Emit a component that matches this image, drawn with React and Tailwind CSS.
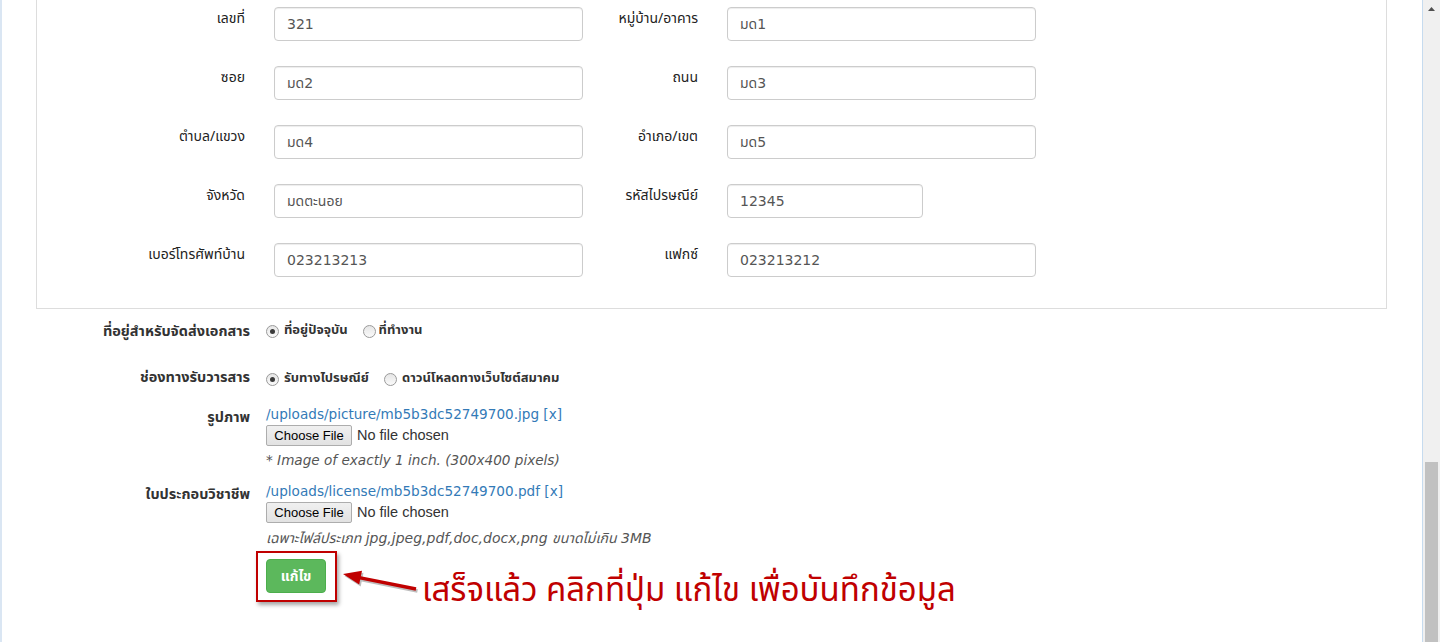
import React from "react";

const leftRows = [
  ["เลขที่", "321"],
  ["ซอย", "มด2"],
  ["ตำบล/แขวง", "มด4"],
  ["จังหวัด", "มดตะนอย"],
  ["เบอร์โทรศัพท์บ้าน", "023213213"],
];

const rightRows = [
  ["หมู่บ้าน/อาคาร", "มด1", false],
  ["ถนน", "มด3", false],
  ["อำเภอ/เขต", "มด5", false],
  ["รหัสไปรษณีย์", "12345", true],
  ["แฟกซ์", "023213212", false],
];

const Field = ({ value, short }) => (
  <div
    className={`${short ? "w-[196px]" : "w-[309px]"} h-[34px] flex items-center px-[12px] border border-[#ccc] rounded-[4px] bg-white shadow-[inset_0_1px_1px_rgba(0,0,0,0.075)] text-[14px] text-[#555] font-['DejaVu_Sans','Noto_Sans_Thai',sans-serif]`}
  >
    {value}
  </div>
);

const Radio = ({ checked }) => (
  <span className="w-[13px] h-[13px] rounded-full border border-[#9a9a9a] bg-gradient-to-b from-[#e6e6e6] to-[#fafafa] flex items-center justify-center shrink-0">
    {checked && <span className="w-[5px] h-[5px] rounded-full bg-[#3a3a3a]" />}
  </span>
);

const FileInput = () => (
  <div className="flex items-center h-[21px]">
    <span className="h-[21px] w-[86px] flex items-center justify-center border border-[#adadad] rounded-[2px] bg-gradient-to-b from-[#f0f0f0] to-[#e2e2e2] text-[13px] text-black font-['Liberation_Sans',Arial,sans-serif]">
      Choose File
    </span>
    <span className="ml-[5px] text-[14.5px] text-[#333] font-['Liberation_Sans',Arial,sans-serif]">No file chosen</span>
  </div>
);

export default function App() {
  return (
    <div className="w-[1440px] h-[642px] overflow-hidden flex bg-white font-['Tahoma','Noto_Sans_Thai','DejaVu_Sans',sans-serif]">
      <div className="w-[2px] bg-[#dae6f3] shrink-0" />

      <div className="w-[1420px] shrink-0">
        {/* address panel */}
        <div className="ml-[34px] w-[1351px] border-x border-b border-[#ddd] pt-[7px] pb-[31px]">
          <div className="flex flex-col gap-[25px]">
            {leftRows.map(([label, value], i) => (
              <div key={label} className="flex items-start">
                <div className="w-[208px] text-right text-[14px] text-[#222] pt-[2px] leading-[20px]">{label}</div>
                <div className="ml-[29px]">
                  <Field value={value} />
                </div>
                <div className="w-[115px] text-right text-[14px] text-[#222] pt-[2px] leading-[20px]">{rightRows[i][0]}</div>
                <div className="ml-[29px]">
                  <Field value={rightRows[i][1]} short={rightRows[i][2]} />
                </div>
              </div>
            ))}
          </div>
        </div>

        {/* lower form */}
        <div className="ml-[34px] mt-[12px] flex flex-col">
          <div className="flex items-center h-[20px]">
            <div className="w-[214px] text-right text-[14.5px] font-bold text-[#333] pt-[3px]">ที่อยู่สำหรับจัดส่งเอกสาร</div>
            <div className="ml-[16px] flex items-center text-[13px] font-bold text-[#333]">
              <Radio checked />
              <span className="ml-[5px]">ที่อยู่ปัจจุบัน</span>
              <span className="ml-[15px]"><Radio /></span>
              <span className="ml-[3px]">ที่ทำงาน</span>
            </div>
          </div>

          <div className="flex items-center h-[20px] mt-[28px]">
            <div className="w-[214px] text-right text-[14.5px] font-bold text-[#333]">ช่องทางรับวารสาร</div>
            <div className="ml-[16px] flex items-center text-[13px] font-bold text-[#333]">
              <Radio checked />
              <span className="ml-[5px]">รับทางไปรษณีย์</span>
              <span className="ml-[15px]"><Radio /></span>
              <span className="ml-[5px]">ดาวน์โหลดทางเว็บไซต์สมาคม</span>
            </div>
          </div>

          <div className="flex items-start mt-[17px]">
            <div className="w-[214px] text-right text-[14.5px] font-bold text-[#333] pt-[2px]">รูปภาพ</div>
            <div className="ml-[16px] flex flex-col">
              <a className="text-[13.6px] leading-[16px] text-[#337ab7] font-['DejaVu_Sans',sans-serif]">/uploads/picture/mb5b3dc52749700.jpg [x]</a>
              <div className="mt-[3px]"><FileInput /></div>
              <div className="mt-[6px] text-[13.6px] leading-[16px] italic text-[#555] font-['DejaVu_Sans',sans-serif]">* Image of exactly 1 inch. (300x400 pixels)</div>
            </div>
          </div>

          <div className="flex items-start mt-[15px]">
            <div className="w-[214px] text-right text-[14.5px] font-bold text-[#333] pt-[2px]">ใบประกอบวิชาชีพ</div>
            <div className="ml-[16px] flex flex-col">
              <a className="text-[13.6px] leading-[16px] text-[#337ab7] font-['DejaVu_Sans',sans-serif]">/uploads/license/mb5b3dc52749700.pdf [x]</a>
              <div className="mt-[3px]"><FileInput /></div>
              <div className="mt-[7px] text-[14px] leading-[16px] italic text-[#555] font-['DejaVu_Sans','Noto_Sans_Thai',sans-serif]">เฉพาะไฟล์ประเภท jpg,jpeg,pdf,doc,docx,png ขนาดไม่เกิน 3MB</div>
            </div>
          </div>

          {/* submit + annotation */}
          <div className="flex items-start mt-[5px] ml-[220px]">
            <div className="border-2 border-[#c00000] pt-[6px] pb-[7px] pl-[8px] pr-[9px] shadow-[2px_3px_4px_rgba(0,0,0,0.35)]">
              <button className="w-[60px] h-[34px] rounded-[4px] bg-[#5cb85c] border border-[#4cae4c] text-white text-[14px] font-bold">แก้ไข</button>
            </div>
            <svg width="80" height="32" viewBox="0 0 80 32" className="ml-[3px] mt-[11px]">
              <g opacity="0.25" transform="translate(1.5,2)">
                <line x1="18" y1="15.4" x2="76" y2="27" stroke="#000" strokeWidth="3.5" />
                <polygon points="3,12 22,8.8 19.2,22.6" fill="#000" />
              </g>
              <line x1="18" y1="15.4" x2="76" y2="27" stroke="#c00000" strokeWidth="3.5" />
              <polygon points="3,12 22,8.8 19.2,22.6" fill="#c00000" />
            </svg>
            <div className="ml-[2px] mt-[21px] text-[33px] leading-[38px] text-[#c00000] whitespace-nowrap">เสร็จแล้ว คลิกที่ปุ่ม แก้ไข เพื่อบันทึกข้อมูล</div>
          </div>
        </div>
      </div>

      {/* window scrollbar */}
      <div className="w-[1px] bg-[#c6dbef] shrink-0" />
      <div className="w-[17px] shrink-0 bg-[#f0f0f0] flex flex-col">
        <div className="h-[17px] flex items-center justify-center">
          <svg width="7" height="4" viewBox="0 0 7 4"><polygon points="0,4 3.5,0 7,4" fill="#505050" /></svg>
        </div>
        <div className="flex-1" />
        <div className="h-[180px] mx-[2px] bg-[#c1c1c1]" />
      </div>
    </div>
  );
}
